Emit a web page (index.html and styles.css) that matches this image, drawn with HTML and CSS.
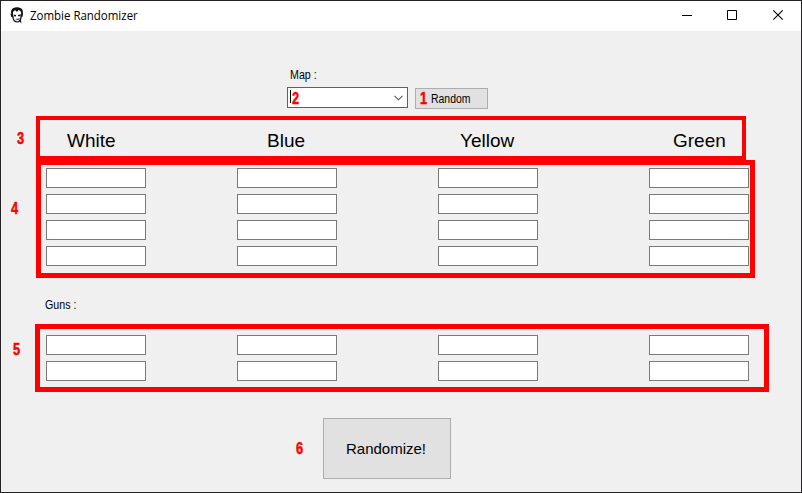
FILE: index.html
```html
<!DOCTYPE html>
<html lang="en">
<head>
<meta charset="utf-8">
<title>Zombie Randomizer</title>
<link rel="stylesheet" href="styles.css">
</head>
<body>
<div class="window">
  <header class="titlebar">
    <svg class="app-icon" width="14" height="17" viewBox="0 0 14 17">
      <path d="M2 7C1 3 3 1 7 1s6 2 5 6l-1 3c0 3-1 4-3 5-3 0-5-2-5-5z" fill="#fff" stroke="#111" stroke-width="1.2"/>
      <path d="M1.500 6C1 2 3 .5 7 .5S13 2 12.500 6l-1 1-1-3-2-1L7 5 5 3 3 5v3z" fill="#111"/>
      <path d="M3.500 7.500l2.500.6v1.400l-2-.3zM8 8l3-.7-.5 2H8zM5 12l5-.6-2 1.600zM10.500 11l1 5.500-2.500-2.500zM.5 6.500l2 0 .8 4.500L1 9.500zM11.700 6l1.500.5-.8 3.500-1.200.5z" fill="#111"/>
    </svg>
    <h1 class="title">Zombie Randomizer</h1>
    <svg class="controls" width="104" height="12" viewBox="0 0 104 12" fill="none" stroke="#000">
      <path d="M0 6.500h10"/>
      <path d="M45.500 1.500h9v9h-9z"/>
      <path d="M91.300 1.300l9.400 9.400M100.700 1.300l-9.400 9.400" stroke-width="1.100"/>
    </svg>
  </header>
  <main class="content">
    <div class="map">
      <label class="label">Map :</label>
      <div class="map-row">
        <div class="combo">
          <i class="caret"></i><b class="num">2</b>
          <svg class="chevron" width="9" height="6" viewBox="0 0 9 6"><path d="M.5 .8l4 4 4-4" fill="none" stroke="#555" stroke-width="1.100"/></svg>
        </div>
        <button class="small-button"><b class="num">1</b><span class="small-text">Random</span></button>
      </div>
    </div>
    <section class="frame players">
      <b class="num marker m3">3</b>
      <span class="name white">White</span><span class="name blue">Blue</span><span class="name yellow">Yellow</span><span class="name green">Green</span>
    </section>
    <section class="frame perks">
      <b class="num marker m4">4</b>
      <div class="grid">
        <i class="field"></i><i class="field"></i><i class="field"></i><i class="field"></i>
        <i class="field"></i><i class="field"></i><i class="field"></i><i class="field"></i>
        <i class="field"></i><i class="field"></i><i class="field"></i><i class="field"></i>
        <i class="field"></i><i class="field"></i><i class="field"></i><i class="field"></i>
      </div>
    </section>
    <div class="label guns-label">Guns :</div>
    <section class="frame guns">
      <b class="num marker m5">5</b>
      <div class="grid">
        <i class="field"></i><i class="field"></i><i class="field"></i><i class="field"></i>
        <i class="field"></i><i class="field"></i><i class="field"></i><i class="field"></i>
      </div>
    </section>
    <div class="action">
      <b class="num marker m6">6</b>
      <button class="big-button"><span class="big-text">Randomize!</span></button>
    </div>
  </main>
</div>
</body>
</html>
```

FILE: styles.css
```css
* { box-sizing: border-box; }
body { margin: 0; background: #262326; font-family: "Liberation Sans", Arial, sans-serif; color: #000; }
.window { width: 802px; height: 493px; border: 1px solid #262326; display: flex; flex-direction: column; overflow: hidden; }
.titlebar { height: 30px; flex: none; background: #fff; display: flex; align-items: center; padding: 0 15px 0 9px; }
.app-icon { flex: none; margin-top: -1px; }
.title { margin: 0 auto 0 6px; font: 400 12px/16px "Open Sans", "Noto Sans", sans-serif; white-space: nowrap; transform: scaleX(.955); transform-origin: 0 50%; }
.controls { flex: none; margin-top: -2px; }
.content { flex: 1; background: #f0f0f0; display: flex; flex-direction: column; align-items: flex-start; }
.map { height: 85px; flex: none; margin-left: 286px; padding-top: 37px; }
.label { display: block; height: 14px; margin-left: 3px; font-size: 12px; line-height: 14px; white-space: nowrap; transform: scaleX(.89); transform-origin: 0 50%; }
.map-row { display: flex; gap: 7px; padding-top: 5px; }
.combo { width: 121px; height: 21px; background: #fff; border: 1px solid #0078d7; display: flex; align-items: center; padding: 0 4px 0 2px; }
.caret { width: 1px; height: 13px; background: #000; margin-top: -2px; }
.chevron { margin-left: auto; }
.num { display: inline-block; width: 9px; flex: none; color: #f00; font-size: 16px; line-height: 16px; font-weight: 700; -webkit-text-stroke: .5px #f00; transform: scaleX(.8); transform-origin: 0 50%; }
.combo .num { margin: 3px 0 0 1px; }
button { font-family: inherit; color: #000; background: #e1e1e1; border: 1px solid #adadad; border-radius: 0; padding: 0; }
.small-button { width: 73px; height: 21px; margin-top: 1px; display: flex; align-items: center; padding-left: 4px; }
.small-button .num { margin-top: 1px; }
.small-text { font-size: 12px; margin: 1px 0 0 2px; transform: scaleX(.87); transform-origin: 0 50%; }
.frame { position: relative; flex: none; border: 5px solid #f00; }
.marker { position: absolute; }
.players { width: 710px; height: 44px; margin-left: 35px; border-width: 4px; display: flex; align-items: center; padding: 5px 0 0 27px; }
.name { font-size: 19px; line-height: 22px; white-space: nowrap; }
.white { width: 200px; }
.blue { width: 193px; }
.yellow { width: 213px; }
.perks { width: 719px; height: 118px; margin-left: 35px; padding: 3px 0 0 5px; }
.grid { display: grid; grid-template-columns: 191px 201px 211px 100px; grid-auto-rows: 20px; row-gap: 6px; }
.field { width: 100px; height: 20px; background: #fff; border: 1px solid #7a7a7a; }
.guns-label { margin: 20px 0 12px 44px; }
.guns { width: 734px; height: 68px; margin-left: 34px; padding: 6px 0 0 6px; }
.action { position: relative; margin: 26px 0 0 322px; }
.big-button { display: flex; align-items: center; justify-content: center; width: 128px; height: 61px; }
.big-text { font-size: 15px; line-height: 18px; margin-left: -2px; }
.m3 { left: -23px; top: 11px; }
.m4 { left: -30px; top: 36px; }
.m5 { left: -27px; top: 13px; }
.m6 { left: -27px; top: 23px; }
```
